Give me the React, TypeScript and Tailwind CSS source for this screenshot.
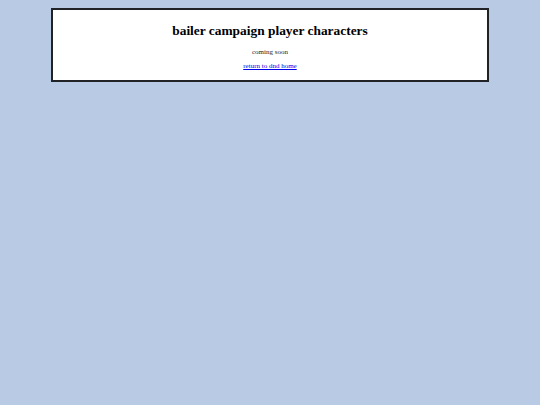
export default function App() {
  return (
    <div className="min-h-[405px] bg-[#b9cae4] pt-[8px] font-['Liberation_Serif',serif] text-black">
      <div className="mx-auto w-[438px] border-2 border-[#202226] bg-white pt-[13px] pb-[10px] text-center">
        <h1 className="text-[13.4px] font-bold leading-[15px]">bailer campaign player characters</h1>
        <p className="mt-[10px] text-[7px] leading-[8px] text-[#222]">coming soon</p>
        <a href="#" className="mt-[6px] block text-[7px] leading-[8px] text-[#0000ee] underline">
          return to dnd home
        </a>
      </div>
    </div>
  );
}
